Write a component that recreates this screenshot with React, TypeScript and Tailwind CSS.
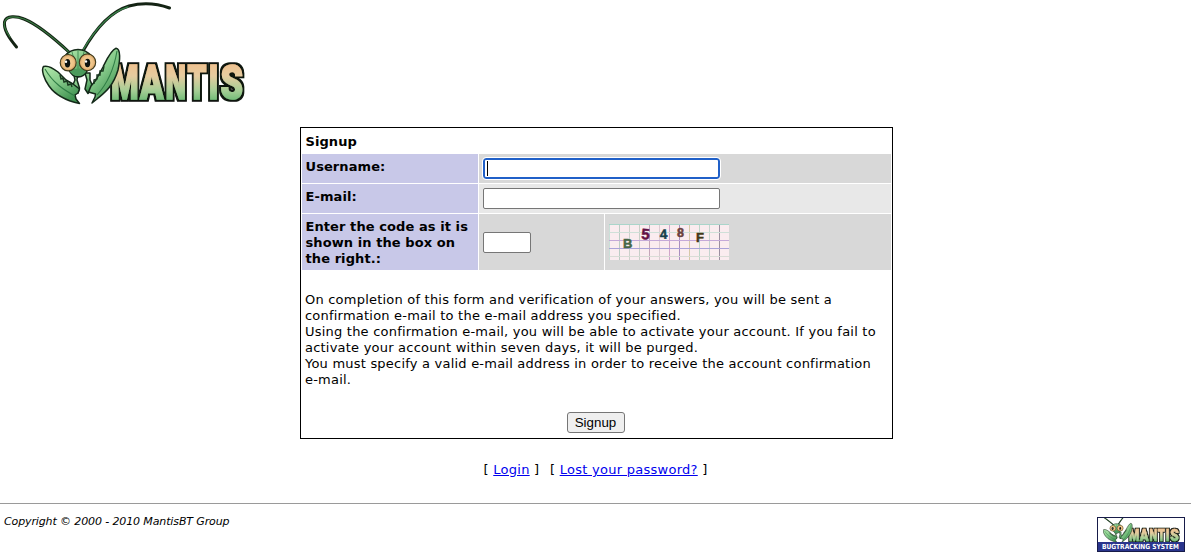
import React from "react";

const letters: [string, number, number][] = [
  ["M", 111, 27.5],
  ["A", 140, 23.5],
  ["N", 165.5, 20.5],
  ["T", 187.5, 19],
  ["I", 208.5, 10],
  ["S", 220.5, 22.5],
];

function Mantis({ id }: { id: string }) {
  return (
    <>
      <defs>
        <linearGradient id={id + "leaf"} x1="0" y1="0" x2="0.6" y2="1">
          <stop offset="0" stopColor="#b5eaae" />
          <stop offset="0.5" stopColor="#86ca8a" />
          <stop offset="1" stopColor="#3f9150" />
        </linearGradient>
        <linearGradient id={id + "word"} gradientUnits="userSpaceOnUse" x1="0" y1="63" x2="0" y2="100">
          <stop offset="0" stopColor="#efc08e" />
          <stop offset="0.35" stopColor="#e6cc9f" />
          <stop offset="0.75" stopColor="#a5ce95" />
          <stop offset="1" stopColor="#73bd78" />
        </linearGradient>
        <radialGradient id={id + "eye"}>
          <stop offset="0" stopColor="#f9d79b" />
          <stop offset="0.7" stopColor="#edc186" />
          <stop offset="1" stopColor="#cf9a5c" />
        </radialGradient>
        <filter id={id + "edge"} x="-10%" y="-10%" width="120%" height="120%">
          <feMorphology in="SourceAlpha" operator="dilate" radius="2 2" result="grown" />
          <feFlood floodColor="#0b140b" />
          <feComposite in2="grown" operator="in" result="outline" />
          <feMerge>
            <feMergeNode in="outline" />
            <feMergeNode in="SourceGraphic" />
          </feMerge>
        </filter>
      </defs>
      <text y="98.7" fontFamily="Roboto, sans-serif" fontWeight="900" fontSize="49" fill={`url(#${id}word)`} stroke={`url(#${id}word)`} strokeWidth="1.5" filter={`url(#${id}edge)`}>
        {letters.map(([c, x, w]) => (
          <tspan key={c} x={x} textLength={w} lengthAdjust="spacingAndGlyphs">{c}</tspan>
        ))}
      </text>
      <g fill="none" strokeLinecap="round">
        <path d="M16.5 47 C9 38 3.5 30 4.5 22 C6 15 17 16 24 19 C39 25 55 39 70 53" stroke="#142314" strokeWidth="3" />
        <path d="M10 37 C5 30 3 24 5 21 C8 15 18 17 24 19 C39 25 55 39 70 53" stroke="#397a42" strokeWidth="1.2" />
        <path d="M83 51 C97 26 112 11 129 6 C142 2.5 157 3.5 169.5 8" stroke="#142314" strokeWidth="3" />
        <path d="M83 50 C97 26 111 12 128 6.8" stroke="#39824a" strokeWidth="1.3" />
      </g>
      <g stroke="#142919" strokeWidth="1.5" strokeLinejoin="round" fill={`url(#${id}leaf)`}>
        <path d="M73.5 73 L75 80 L72 87 L78 93 L79.5 88 L77 80 L78 73 Z M85 73 L87 80 L85 89 L88 93.5 L93 87 L90 80 L90 73 Z" />
        <path d="M43.5 66.5 C48 65 53 68 58 72 L66 80 L73 84 L79.5 89 L78 93 L75 95 L76 99 L79.5 103.5 C68 101 56 96 49 86 C44 79 41 70 43.5 66.5 Z" />
        <path d="M116 48.3 C121 49 120 60 118 70 C113 87 104 93 97 99 L92 103 L95 97 L95.5 94 L88.5 92 L91 86 L96 80 L103 67 C107 59 111 50 116 48.3 Z" />
      </g>
      <path d="M45 69 C53 83 64 90 75 96 M117 51 C114 69 108 83 97 95" fill="none" stroke="#2f7d45" strokeWidth="1.1" />
      <path d="M60 75 l1 4 l2 -1 l1 4 l3 -1 l1 4 l3 -1 l1 3 M104 66 l-1 5 l-3 0 l0 4 l-3 0 l0 4 l-3 1 l0 4" fill="none" stroke="#19381f" strokeWidth="1.4" />
      <path d="M65 56 C69 51 74 49.5 78 49.5 C83 49.5 88 52 91 56 L87 71 C83 79 73 79 69 70 Z" fill={`url(#${id}leaf)`} stroke="#142919" strokeWidth="1.6" />
      <path d="M69 70 C74 68 75 70 78 68 C82 70 84 68 87 70 C83 78 73 78 69 70 Z" fill="#4b9a5b" />
      <path d="M78 50 L78 68 M72 52 L76 66 M84 52 L80 66" stroke="#3d8850" fill="none" strokeWidth=".9" />
      <g fill={`url(#${id}eye)`} stroke="#3e3a1c" strokeWidth="1.1">
        <ellipse cx="68.2" cy="62.7" rx="8" ry="8.2" />
        <ellipse cx="87.5" cy="62.3" rx="8.2" ry="8.4" />
      </g>
      <ellipse cx="67.5" cy="63.3" rx="2.7" ry="4.2" fill="#0d1310" />
      <ellipse cx="87.5" cy="63" rx="2.7" ry="4.2" fill="#0d1310" />
      <circle cx="66" cy="61.8" r="1.2" fill="white" />
      <circle cx="86" cy="61.5" r="1.2" fill="white" />
    </>
  );
}

const code: [string, number, number, number, string, number][] = [
  ["B", 14, 24, 13, "#476747", 0],
  ["5", 32, 15, 15, "#641145", 4],
  ["4", 51, 15, 13.5, "#173f4b", -3],
  ["8", 68, 13, 12.5, "#6b423d", 0],
  ["F", 87, 18, 13, "#443817", 0],
];

function Captcha() {
  return (
    <svg width="120" height="36" viewBox="0 0 120 36" className="block">
      <rect width="120" height="36" fill="#faecef" />
      {["#c9dfd8", "#bccdc5", "#cdd1cb", "#c8cfc8", "#c4a5b9", "#dbcbd2", "#d0a5ca", "#a98ec0", "#d6c8a6", "#bcd6ca", "#c4d4cf", "#9b8fa0"].map((c, i) => (
        <path key={i} d={`M${i * 10 + 0.5} 0V36`} stroke={c} />
      ))}
      <path d="M0 .5H120" stroke="#aad5ca" />
      <path d="M0 8.5H120" stroke="#cfe0d8" />
      <path d="M0 16.5H120" stroke="#c4a9d8" />
      <path d="M0 24.5H120" stroke="#aaa3d8" />
      <path d="M0 32.5H120" stroke="#d9dcd6" />
      {code.map(([c, x, y, size, color, turn]) => (
        <text key={x} x={x} y={y} fontSize={size} fill={color} stroke={color} strokeWidth=".5" fontWeight="700" fontFamily="Liberation Sans, sans-serif" transform={`rotate(${turn} ${x} ${y})`}>{c}</text>
      ))}
    </svg>
  );
}

const label = "bg-[#c8c8e8] pl-[3.5px] pt-[5px] font-bold tracking-[0.08px]";
const paragraph = [
  "On completion of this form and verification of your answers, you will be sent a",
  "confirmation e-mail to the e-mail address you specified.",
  "Using the confirmation e-mail, you will be able to activate your account. If you fail to",
  "activate your account within seven days, it will be purged.",
  "You must specify a valid e-mail address in order to receive the account confirmation",
  "e-mail.",
];

export default function App() {
  return (
    <div className="h-[559px] w-[1192px] overflow-hidden bg-white font-['DejaVu_Sans',sans-serif] text-[13px] leading-4 text-black">
      <header className="h-[127px]">
        <svg width="250" height="110" viewBox="0 0 250 110" role="img" aria-label="Mantis"><Mantis id="main" /></svg>
      </header>
      <form className="ml-[300px] h-[312px] w-[593px] border border-black p-px" onSubmit={(e) => e.preventDefault()}>
        <h1 className="h-[25px] pl-[3.5px] pt-[5px] font-bold tracking-[0.08px]">Signup</h1>
        <div className="grid grid-cols-[176px_1fr] grid-rows-[29px_29px_56px] gap-px">
          <label htmlFor="username" className={label}>Username:</label>
          <div className="flex items-center bg-[#d8d8d8] pl-1">
            <div className="flex h-[21px] w-[237px] items-center rounded-[3px] border-2 border-[#2060c8] bg-white pl-[2px] outline outline-1 outline-white">
              <span className="h-[15px] w-px bg-black" />
              <input id="username" className="h-full w-full bg-transparent caret-transparent outline-none" />
            </div>
          </div>
          <label htmlFor="email" className={label}>E-mail:</label>
          <div className="flex items-center bg-[#e8e8e8] pl-1">
            <input id="email" className="h-[21px] w-[237px] rounded-[2px] border border-[#767676] bg-white px-1" />
          </div>
          <label htmlFor="code" className={label + " whitespace-nowrap"}>
            Enter the code as it is<br />shown in the box on<br />the right.:
          </label>
          <div className="grid grid-cols-[125px_1fr] gap-px">
            <div className="flex items-center bg-[#d8d8d8] pl-1">
              <input id="code" className="h-[21px] w-12 rounded-[2px] border border-[#767676] bg-white px-1" />
            </div>
            <div className="flex items-center bg-[#d8d8d8] pl-1"><Captcha /></div>
          </div>
        </div>
        <p className="whitespace-nowrap pl-[3px] pt-[22px] tracking-[0.215px]">
          {paragraph.map((line) => <span key={line} className="block">{line}</span>)}
        </p>
        <div className="flex justify-center pr-[2px] pt-[24px]">
          <button className="h-[21px] w-[58px] rounded-[3px] border border-[#767676] bg-[#efefef] font-['Liberation_Sans',sans-serif] text-[13.33px] leading-4">Signup</button>
        </div>
      </form>
      <nav className="ml-[483.5px] mt-[23px] flex h-4 whitespace-pre tracking-[0.27px]">
        <span>[ <a href="#" className="text-[#0000ee] underline">Login</a> ]</span>
        <span className="ml-[10.5px]">[ <a href="#" className="text-[#0000ee] underline">Lost your password?</a> ]</span>
      </nav>
      <footer className="mt-[25px] flex w-[1191px] justify-between border-t border-[#9a9a9a] pl-[4px] pr-[6px]">
        <p className="pt-[10px] text-[11px] italic tracking-[-0.12px]">Copyright © 2000 - 2010 MantisBT Group</p>
        <svg width="88" height="35" viewBox="0 0 88 35" className="mt-[13px]" role="img" aria-label="Mantis Bugtracking System">
          <rect x=".5" y=".5" width="87" height="34" fill="#fff" stroke="#171b49" />
          <svg x="6" y="1" width="79" height="26" viewBox="42 33 210 75" preserveAspectRatio="none"><Mantis id="badge" /></svg>
          <rect x="1" y="25" width="86" height="9" fill="#29348c" />
          <text x="5" y="32.3" fontFamily="DejaVu Sans, sans-serif" fontSize="7" fontWeight="700" fill="#fff" textLength="77" lengthAdjust="spacingAndGlyphs">BUGTRACKING SYSTEM</text>
        </svg>
      </footer>
    </div>
  );
}
